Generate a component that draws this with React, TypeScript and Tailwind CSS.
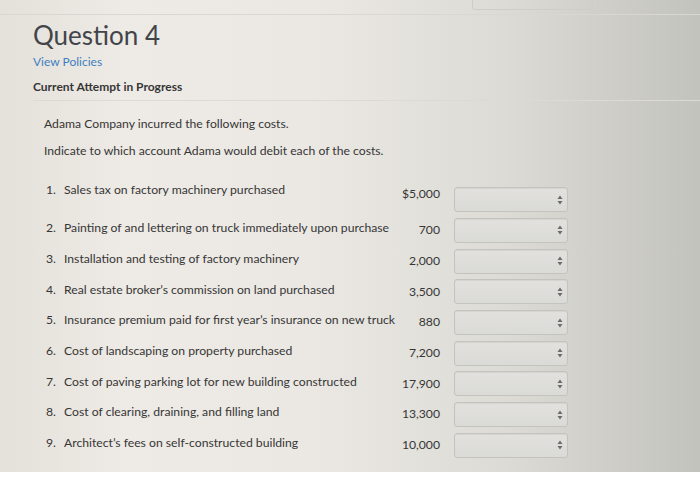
import React from "react";

const rows: { n: string; label: string; amount: string }[] = [
  { n: "1.", label: "Sales tax on factory machinery purchased", amount: "$5,000" },
  { n: "2.", label: "Painting of and lettering on truck immediately upon purchase", amount: "700" },
  { n: "3.", label: "Installation and testing of factory machinery", amount: "2,000" },
  { n: "4.", label: "Real estate broker’s commission on land purchased", amount: "3,500" },
  { n: "5.", label: "Insurance premium paid for first year’s insurance on new truck", amount: "880" },
  { n: "6.", label: "Cost of landscaping on property purchased", amount: "7,200" },
  { n: "7.", label: "Cost of paving parking lot for new building constructed", amount: "17,900" },
  { n: "8.", label: "Cost of clearing, draining, and filling land", amount: "13,300" },
  { n: "9.", label: "Architect’s fees on self-constructed building", amount: "10,000" },
];

function Arrows() {
  return (
    <svg width="6" height="10" viewBox="0 0 6 10" className="shrink-0">
      <path d="M3 0.5 L5.5 4 L0.5 4 Z" fill="#6b6b6b" />
      <path d="M3 9.5 L5.5 6 L0.5 6 Z" fill="#6b6b6b" />
    </svg>
  );
}

function SelectBox() {
  return (
    <div className="w-[114px] h-[25px] rounded-[3px] border border-[#c4c4bf] bg-[linear-gradient(180deg,#e2e1dd,#dadad6)] shadow-[inset_0_1px_1px_rgba(0,0,0,0.06)] flex items-center justify-end pr-[4px]">
      <Arrows />
    </div>
  );
}

export default function App() {
  return (
    <div
      className="w-[700px] h-[478px] overflow-hidden flex flex-col text-[#363636] bg-[linear-gradient(90deg,#e4e0da_0%,#eeeae5_18%,#ebe8e3_45%,#dcdbd6_72%,#c3c3be_100%)]"
      style={{ fontFamily: "Lato, 'Open Sans', sans-serif" }}
    >
      <div className="h-[15px] border-b border-[#d9d7d2] shrink-0 overflow-hidden">
        <div className="ml-[472px] w-[121px] h-[24px] -mt-[14px] border border-[#cfcdc8] rounded-[3px] flex items-end justify-center pb-[7px]">
          <span className="text-[12px] leading-none text-[#bdbbb6] ml-[24px]">Feedback</span>
        </div>
      </div>
      <div className="flex-1 pl-[33px]">
        <div className="text-[26px] leading-none text-[#41454a] mt-[7px]">Question 4</div>
        <div className="text-[12px] leading-none text-[#3f7fc1] mt-[8px]">View Policies</div>
        <div className="text-[12px] leading-none font-bold text-[#363636] mt-[13px]">Current Attempt in Progress</div>
        <div className="border-b border-[#dcdad5] mt-[7px]" />
        <div className="pl-[11px] text-[12.2px] leading-none">
          <div className="mt-[17px]">Adama Company incurred the following costs.</div>
          <div className="mt-[15px]">Indicate to which account Adama would debit each of the costs.</div>
          <div className="mt-[27px] flex flex-col">
            {rows.map((r, i) => (
              <div key={r.n} className="flex h-[30.7px] items-center">
                <div className={`w-[352px] flex ${i === 0 ? "mb-[19px]" : "mb-[4px]"}`}>
                  <span className="w-[20px] pl-[2px]">{r.n}</span>
                  <span>{r.label}</span>
                </div>
                <div className={`w-[44px] text-right ${i === 0 ? "mb-[11px]" : ""}`}>{r.amount}</div>
                <div className="ml-[14px]">
                  <SelectBox />
                </div>
              </div>
            ))}
          </div>
        </div>
      </div>
      <div className="h-[6px] bg-white shrink-0" />
    </div>
  );
}
